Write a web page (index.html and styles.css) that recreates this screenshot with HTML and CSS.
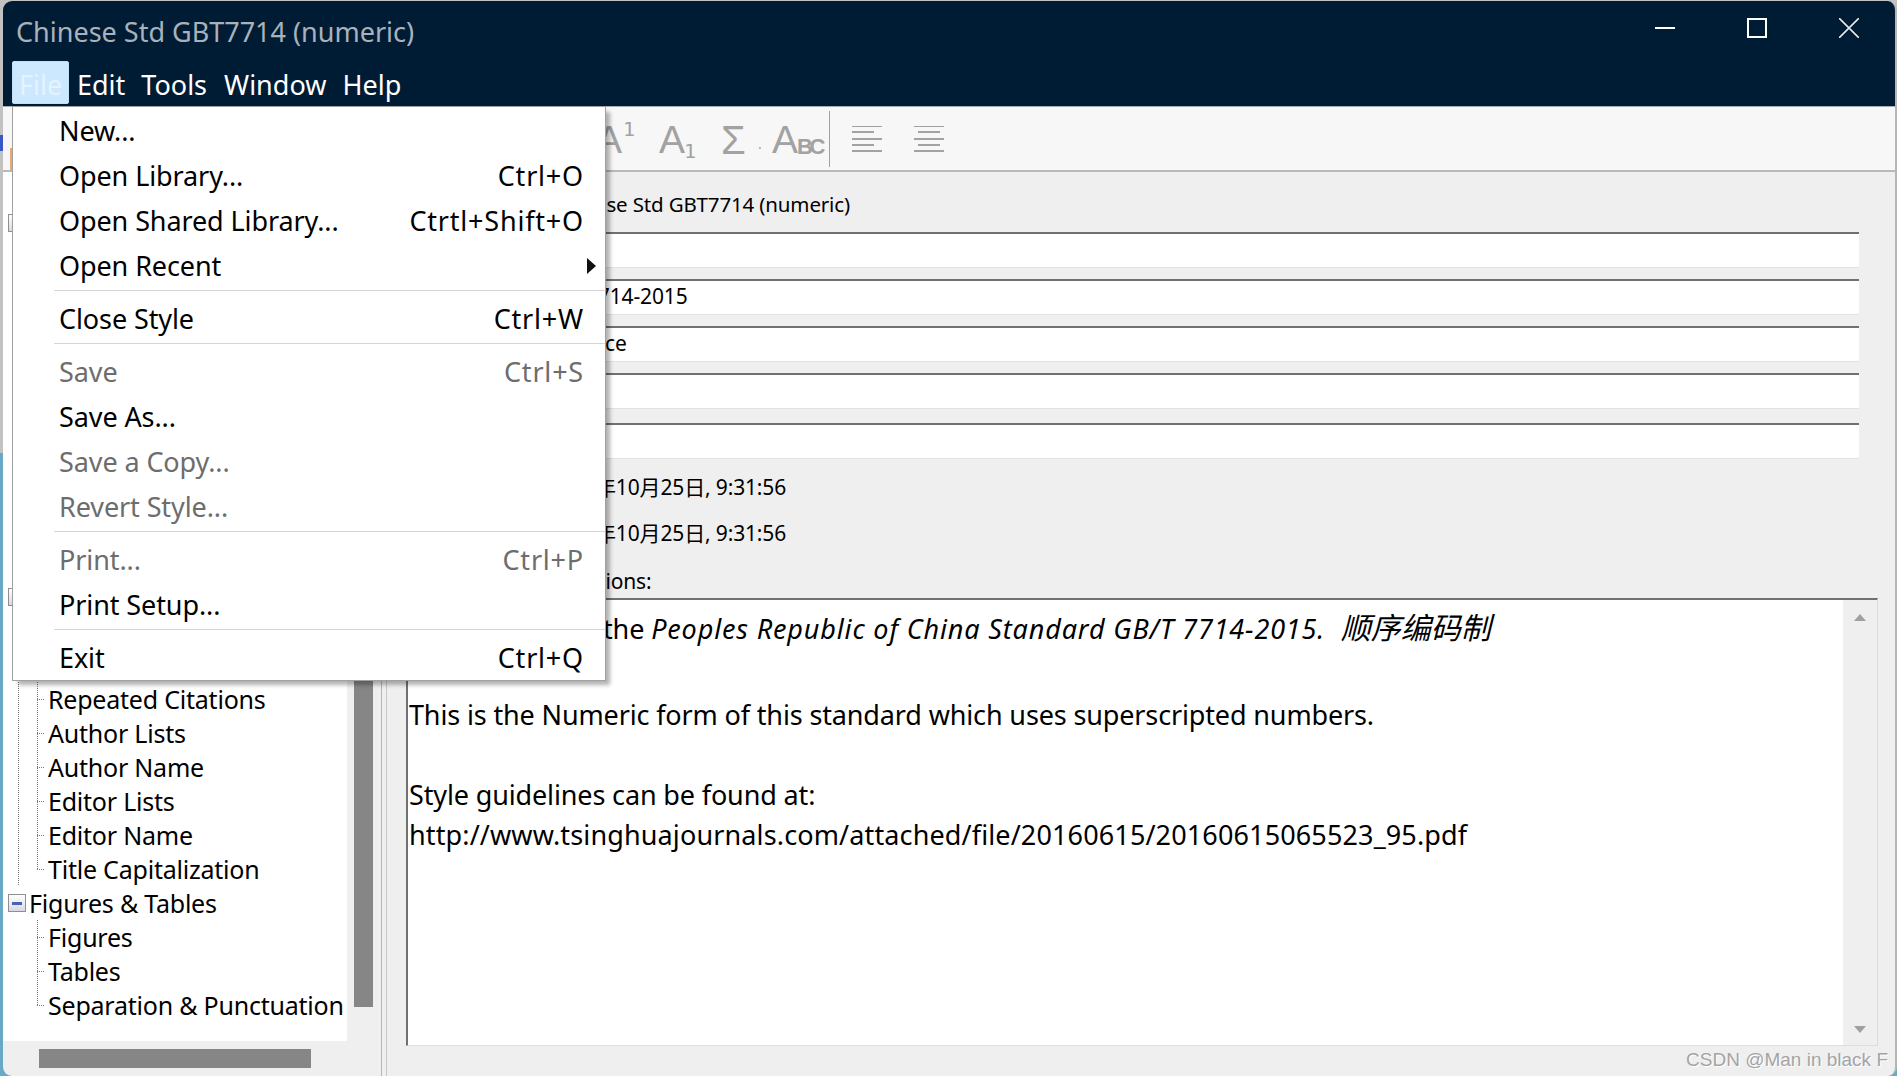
FILE: index.html
```html
<!DOCTYPE html>
<html lang="en">
<head>
<meta charset="utf-8">
<title>Chinese Std GBT7714 (numeric)</title>
<link rel="stylesheet" href="styles.css">
</head>
<body>
<div class="window">
  <header class="titlebar">
    <div class="title-row">
      <div class="title">Chinese Std GBT7714 (numeric)</div>
      <div class="controls">
        <svg class="ctl" viewBox="0 0 20 20"><path d="M0 10H20" stroke="#fff" stroke-width="2"/></svg>
        <svg class="ctl" viewBox="0 0 20 20"><rect x="1" y="1" width="18" height="18" fill="none" stroke="#fff" stroke-width="2"/></svg>
        <svg class="ctl" viewBox="0 0 20 20"><path d="M0 0L20 20M20 0L0 20" stroke="#e8e8e8" stroke-width="1.6"/></svg>
      </div>
    </div>
    <nav class="menubar">
      <span class="mb-item active">File</span>
      <span class="mb-item">Edit</span>
      <span class="mb-item mb-tools">Tools</span>
      <span class="mb-item">Window</span>
      <span class="mb-item">Help</span>
    </nav>
  </header>
  <div class="toolbar">
    <span class="tb-peek"></span>
    <span class="tb-a tb-sup">A<span class="s1">1</span></span>
    <span class="tb-a tb-sub">A<span class="s2">1</span></span>
    <span class="tb-sigma">Σ</span>
    <span class="tb-dot">.</span>
    <span class="tb-abc">A<span class="bc">BC</span></span>
    <span class="tb-sep"></span>
    <svg class="tb-align" viewBox="0 0 30 26"><path d="M0 1H30M0 7H22M0 14H30M0 20H22M0 26H30" stroke="#a2a2a2" stroke-width="2" transform="translate(0 -1)"/></svg>
    <svg class="tb-align tb-align2" viewBox="0 0 30 26"><path d="M0 1H30M4 7H26M0 14H30M4 20H26M0 26H30" stroke="#a2a2a2" stroke-width="2" transform="translate(0 -1)"/></svg>
  </div>
  <main class="body">
    <aside class="tree-pane">
      <div class="tree-main">
        <div class="tree">
          <div class="hidden-rows">
            <span class="row"></span>
            <span class="row"><span class="exp"></span></span>
          </div>
          <div class="hidden-rows2">
            <span class="row"><span class="exp"></span></span>
          </div>
          <div class="branch branch-a">
            <div class="leaf">Repeated Citations</div>
            <div class="leaf">Author Lists</div>
            <div class="leaf">Author Name</div>
            <div class="leaf">Editor Lists</div>
            <div class="leaf">Editor Name</div>
            <div class="leaf">Title Capitalization</div>
          </div>
          <div class="group"><span class="exp"><span class="minus"></span></span>Figures &amp; Tables</div>
          <div class="branch">
            <div class="leaf">Figures</div>
            <div class="leaf">Tables</div>
            <div class="leaf">Separation &amp; Punctuation</div>
          </div>
        </div>
        <div class="vscroll"><div class="vthumb"></div></div>
      </div>
      <div class="hscroll"><div class="hthumb"></div></div>
    </aside>
    <div class="splitter"></div>
    <section class="detail">
      <div class="line name-line">Chinese Std GBT7714 (numeric)</div>
      <div class="field"></div>
      <div class="field f-text">7714-2015</div>
      <div class="field f-text2">ce</div>
      <div class="field"></div>
      <div class="field f-last"></div>
      <div class="line date">年10月25日, 9:31:56</div>
      <div class="line date date2">年10月25日, 9:31:56</div>
      <div class="line notes-label">tions:</div>
      <div class="notes">
        <div class="notes-text">
          <p class="p1">the <i class="it">Peoples Republic of China Standard GB/T 7714-2015.&nbsp; <span class="cjk">顺序编码制</span></i></p>
          <p class="p2">This is the Numeric form of this standard which uses superscripted numbers.</p>
          <p class="p3">Style guidelines can be found at:<br><span class="url">http://www.tsinghuajournals.com/attached/file/20160615/20160615065523_95.pdf</span></p>
        </div>
        <div class="notes-scroll">
          <span class="arrow-up"></span>
          <span class="arrow-down"></span>
        </div>
      </div>
    </section>
  </main>
  <div class="menu">
    <div class="mi"><span>New...</span></div>
    <div class="mi"><span>Open Library...</span><span class="key">Ctrl+O</span></div>
    <div class="mi"><span>Open Shared Library...</span><span class="key">Ctrtl+Shift+O</span></div>
    <div class="mi"><span>Open Recent</span><span class="submenu"></span></div>
    <div class="msep"></div>
    <div class="mi"><span>Close Style</span><span class="key">Ctrl+W</span></div>
    <div class="msep"></div>
    <div class="mi dis"><span>Save</span><span class="key">Ctrl+S</span></div>
    <div class="mi"><span>Save As...</span></div>
    <div class="mi dis"><span>Save a Copy...</span></div>
    <div class="mi dis"><span>Revert Style...</span></div>
    <div class="msep"></div>
    <div class="mi dis"><span>Print...</span><span class="key">Ctrl+P</span></div>
    <div class="mi"><span>Print Setup...</span></div>
    <div class="msep"></div>
    <div class="mi"><span>Exit</span><span class="key">Ctrl+Q</span></div>
  </div>
  <div class="watermark">CSDN @Man in black F</div>
</div>
</body>
</html>
```
FILE: styles.css
```css
* { box-sizing: border-box; }
html, body { margin: 0; height: 100%; }
body {
  background:
    linear-gradient(#3558c4, #3558c4) 0 135px / 3px 16px no-repeat,
    linear-gradient(#c2c2c2 0, #c2c2c2 453px, #6aa9c5 453px, #6aa9c5 100%);
  overflow: hidden;
  font-family: "Noto Sans", "Noto Sans CJK SC", sans-serif;
  color: #000;
}
.window {
  position: relative;
  margin: 1px 5px 0 3px;
  height: 1075px;
  display: flex;
  flex-direction: column;
  background: #efefef;
  border-radius: 9px;
  overflow: hidden;
  border-right: 2px solid #b5b5b5;
}
body::after {
  content: "";
  position: fixed;
  top: 0; right: 0; bottom: 0;
  width: 5px;
  background: #fff;
}
.titlebar { background: #001c35; height: 106px; flex: none; border-bottom: 1px solid #a5adb5; }
.title-row { display: flex; height: 60px; align-items: flex-start; justify-content: space-between; }
.title { color: #a9b2ba; font-size: 27px; padding: 12px 0 0 13px; line-height: 38px; }
.controls { display: flex; gap: 72px; padding: 17px 36px 0 0; }
.ctl { width: 20px; height: 20px; display: block; }
.menubar { display: flex; height: 45px; padding-left: 9px; color: #fff; font-size: 27px; line-height: 42px; }
.mb-item { padding: 3px 8px 0; height: 43px; }
.mb-tools { margin-right: 1px; }
.mb-item.active { background: #cce8ff; color: #e4f3ff; border: 1px solid #bfe0fb; border-radius: 2px; width: 57px; padding: 2px 6px 0; }
.toolbar {
  flex: none; height: 65px; background: #f7f7f7; border-bottom: 2px solid #b9b9b9;
  display: flex; align-items: flex-start; color: #a2a2a2;
}
.tb-peek { width: 2px; height: 22px; background: #e8a870; margin: 41px 0 0 7px; flex: none; }
.tb-a, .tb-sigma, .tb-abc { font-family: "Liberation Sans", sans-serif; font-size: 39px; line-height: 46px; margin-top: 10px; display: flex; flex: none; }
.s1, .s2 { font-family: "DejaVu Sans Mono", monospace; font-size: 20px; line-height: 20px; margin-left: 1px; }
.s1 { margin-top: 2px; }
.s2 { margin-top: 24px; margin-left: -1px; }
.tb-sup { width: 40px; margin-left: 584px; }
.tb-sub { width: 38px; margin-left: 23px; }
.tb-sigma { width: 22px; margin-left: 24px; font-size: 40px; }
.tb-dot { font-size: 14px; margin: 27px 0 0 15px; width: 14px; flex: none; }
.tb-abc { width: 46px; margin-left: 0; }
.bc { font-size: 22px; font-weight: 700; letter-spacing: -3.5px; margin-top: 7px; margin-left: -1px; }
.tb-sep { width: 1px; height: 56px; background: #a0a0a0; margin: 4px 0 0 11px; flex: none; }
.tb-align { width: 30px; height: 26px; margin: 19px 0 0 22px; flex: none; }
.tb-align2 { margin-left: 32px; }
.body { flex: 1; min-height: 0; display: flex; }
.tree-pane { width: 378px; flex: none; display: flex; flex-direction: column; }
.tree-main { display: flex; height: 869px; }
.tree { width: 344px; background: #fff; font-size: 25px; letter-spacing: -0.22px; position: relative; }
.row { display: flex; height: 34px; align-items: center; }
.hidden-rows { height: 408px; }
.hidden-rows2 { height: 102px; }
.exp {
  width: 18px; height: 18px; flex: none; margin: 0 3px 0 5px;
  background: linear-gradient(#fff, #d8d8e4);
  border: 1px solid #8f8f8f; display: inline-flex; align-items: center; justify-content: center;
}
.minus { width: 10px; height: 3px; background: #4a63b0; display: block; }
.group { height: 34px; display: flex; align-items: center; line-height: 34px; white-space: nowrap; }
.branch { margin-left: 34px; position: relative; background: repeating-linear-gradient(#777 0 1px, transparent 1px 2px) 0 0 / 1px calc(100% - 17px) no-repeat; }
.branch-a::before, .branch-a::after {
  content: ""; position: absolute; top: -34px; bottom: 0; width: 1px;
  background: repeating-linear-gradient(#777 0 1px, transparent 1px 2px);
}
.branch-a::before { left: -19px; }
.branch-a::after { left: 0; bottom: 100%; }
.leaf {
  height: 34px; line-height: 34px; padding-left: 11px; white-space: nowrap;
  background: repeating-linear-gradient(90deg, #777 0 1px, transparent 1px 2px) 0 17px / 8px 1px no-repeat;
}
.vscroll { width: 34px; padding-left: 7px; }
.vthumb { width: 19px; height: 835px; background: #868686; }
.hscroll { height: 30px; padding: 8px 0 0 36px; }
.hthumb { width: 272px; height: 19px; background: #868686; }
.splitter { width: 25px; flex: none; position: relative; border-left: 1px solid #b5b5b5; }
.splitter::before { content: ""; position: absolute; left: 4px; top: 0; bottom: 0; width: 1px; background: #c9c9c9; }
.detail { flex: 1; min-width: 0; display: flex; flex-direction: column; padding-right: 17px; font-size: 21px; letter-spacing: -0.15px; }
.line { white-space: nowrap; }
.name-line { height: 60px; line-height: 65px; padding-left: 146px; font-size: 20.5px; }
.field { height: 36px; background: #fff; border-top: 2px solid #707070; border-bottom: 1px solid #e2e2e2; margin: 0 19px 11px 0; line-height: 30px; padding-left: 146px; }
.f-text { padding-left: 180px; }
.f-text2 { padding-left: 199px; }
.f-last { margin: 3px 19px 0 0; }
.date { height: 47px; line-height: 56px; padding-left: 189px; }
.date2 { height: 46px; line-height: 54px; }
.notes-label { height: 46px; line-height: 58px; padding-left: 192px; }
.notes { flex: 1; min-height: 0; display: flex; background: #fff; border-top: 2px solid #707070; border-left: 2px solid #707070; border-bottom: 1px solid #ddd; border-right: 1px solid #ddd; margin-bottom: 30px; font-size: 27px; letter-spacing: -0.14px; }
.notes-text { flex: 1; padding: 0 0 0 1px; }
.notes-text p { margin: 0; line-height: 40px; white-space: nowrap; }
.p1 { padding: 8px 0 0 194px; }
.it { letter-spacing: 0.85px; }
.cjk { font-size: 30px; letter-spacing: 0; }
.url { letter-spacing: 0.13px; }
.p2 { margin-top: 46px !important; }
.p3 { margin-top: 40px !important; }
.notes-scroll { width: 34px; background: #efefef; display: flex; flex-direction: column; justify-content: space-between; align-items: center; padding: 14px 0 12px; }
.arrow-up { width: 0; height: 0; border: 6px solid transparent; border-top: 0; border-bottom: 7px solid #a0a0a0; }
.arrow-down { width: 0; height: 0; border: 6px solid transparent; border-bottom: 0; border-top: 7px solid #a0a0a0; }
.menu {
  position: absolute; left: 9px; top: 105px; width: 594px; height: 575px;
  background: #fff; border: 1px solid #a0a0a0; padding: 1px 0 0 0;
  box-shadow: 5px 5px 4px -1px rgba(0,0,0,.3); font-size: 27px; letter-spacing: -0.1px;
}
.mi { height: 45px; display: flex; align-items: center; justify-content: space-between; padding: 0 21px 0 46px; white-space: nowrap; }
.key { letter-spacing: 0.8px; }
.dis { color: #6d6d6d; }
.msep { height: 8px; margin-left: 41px; position: relative; }
.msep::before { content: ""; position: absolute; left: 0; right: 0; top: 2px; height: 1px; background: #d4d4d4; }
.submenu { width: 0; height: 0; border-left: 9px solid #111; border-top: 8px solid transparent; border-bottom: 8px solid transparent; margin-right: -12px; }
.watermark { position: absolute; right: 7px; bottom: 5px; font-family: "Liberation Sans", sans-serif; font-size: 19px; color: #a4a4a4; text-shadow: 1px 1px 0 #fff; line-height: 23px; }
```
